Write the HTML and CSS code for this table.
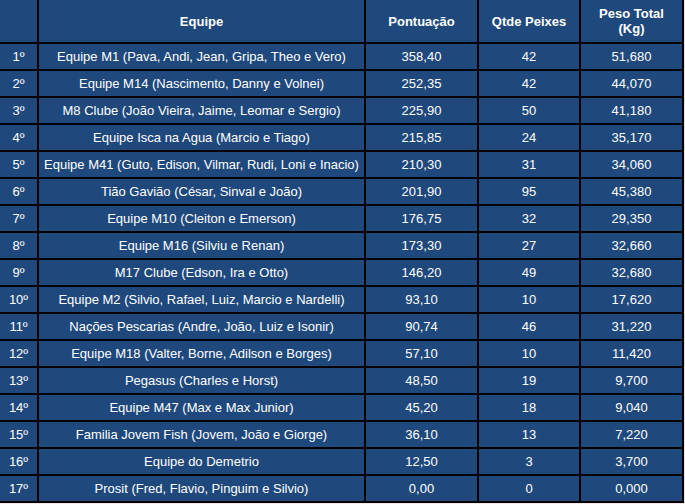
FILE: index.html
```html
<!DOCTYPE html>
<html lang="pt">
<head>
<meta charset="utf-8">
<link rel="stylesheet" href="styles.css">
</head>
<body>
<div class="grid">
  <div class="cell head"></div>
  <div class="cell head">Equipe</div>
  <div class="cell head">Pontuação</div>
  <div class="cell head">Qtde Peixes</div>
  <div class="cell head">Peso Total<br>(Kg)</div>

  <div class="cell">1º</div><div class="cell">Equipe M1 (Pava, Andi, Jean, Gripa, Theo e Vero)</div><div class="cell">358,40</div><div class="cell">42</div><div class="cell">51,680</div>
  <div class="cell">2º</div><div class="cell">Equipe M14 (Nascimento, Danny e Volnei)</div><div class="cell">252,35</div><div class="cell">42</div><div class="cell">44,070</div>
  <div class="cell">3º</div><div class="cell">M8 Clube (João Vieira, Jaime, Leomar e Sergio)</div><div class="cell">225,90</div><div class="cell">50</div><div class="cell">41,180</div>
  <div class="cell">4º</div><div class="cell">Equipe Isca na Agua (Marcio e Tiago)</div><div class="cell">215,85</div><div class="cell">24</div><div class="cell">35,170</div>
  <div class="cell">5º</div><div class="cell">Equipe M41 (Guto, Edison, Vilmar, Rudi, Loni e Inacio)</div><div class="cell">210,30</div><div class="cell">31</div><div class="cell">34,060</div>
  <div class="cell">6º</div><div class="cell">Tião Gavião (César, Sinval e João)</div><div class="cell">201,90</div><div class="cell">95</div><div class="cell">45,380</div>
  <div class="cell">7º</div><div class="cell">Equipe M10 (Cleiton e Emerson)</div><div class="cell">176,75</div><div class="cell">32</div><div class="cell">29,350</div>
  <div class="cell">8º</div><div class="cell">Equipe M16 (Silviu e Renan)</div><div class="cell">173,30</div><div class="cell">27</div><div class="cell">32,660</div>
  <div class="cell">9º</div><div class="cell">M17 Clube (Edson, Ira e Otto)</div><div class="cell">146,20</div><div class="cell">49</div><div class="cell">32,680</div>
  <div class="cell">10º</div><div class="cell">Equipe M2 (Silvio, Rafael, Luiz, Marcio e Nardelli)</div><div class="cell">93,10</div><div class="cell">10</div><div class="cell">17,620</div>
  <div class="cell">11º</div><div class="cell">Nações Pescarias (Andre, João, Luiz e Isonir)</div><div class="cell">90,74</div><div class="cell">46</div><div class="cell">31,220</div>
  <div class="cell">12º</div><div class="cell">Equipe M18 (Valter, Borne, Adilson e Borges)</div><div class="cell">57,10</div><div class="cell">10</div><div class="cell">11,420</div>
  <div class="cell">13º</div><div class="cell">Pegasus (Charles e Horst)</div><div class="cell">48,50</div><div class="cell">19</div><div class="cell">9,700</div>
  <div class="cell">14º</div><div class="cell">Equipe M47 (Max e Max Junior)</div><div class="cell">45,20</div><div class="cell">18</div><div class="cell">9,040</div>
  <div class="cell">15º</div><div class="cell">Familia Jovem Fish (Jovem, João e Giorge)</div><div class="cell">36,10</div><div class="cell">13</div><div class="cell">7,220</div>
  <div class="cell">16º</div><div class="cell">Equipe do Demetrio</div><div class="cell">12,50</div><div class="cell">3</div><div class="cell">3,700</div>
  <div class="cell">17º</div><div class="cell">Prosit (Fred, Flavio, Pinguim e Silvio)</div><div class="cell">0,00</div><div class="cell">0</div><div class="cell">0,000</div>
</div>
</body>
</html>
```
FILE: styles.css
```css
html, body {
  margin: 0;
  padding: 0;
  background: #e8e8e8;
}
.grid {
  display: grid;
  width: 682px;
  grid-template-columns: 37px 325px 111px 100px 101px;
  grid-template-rows: 42px repeat(17, 25px);
  gap: 2px;
  padding: 0 2px 2px 0;
  background: #000;
  font-family: "Liberation Sans", Arial, sans-serif;
  font-size: 13px;
  color: #fff;
}
.cell {
  background: #1f497d;
  display: flex;
  align-items: center;
  justify-content: center;
  text-align: center;
  white-space: nowrap;
  line-height: 15px;
}
.head {
  font-weight: bold;
}
```
